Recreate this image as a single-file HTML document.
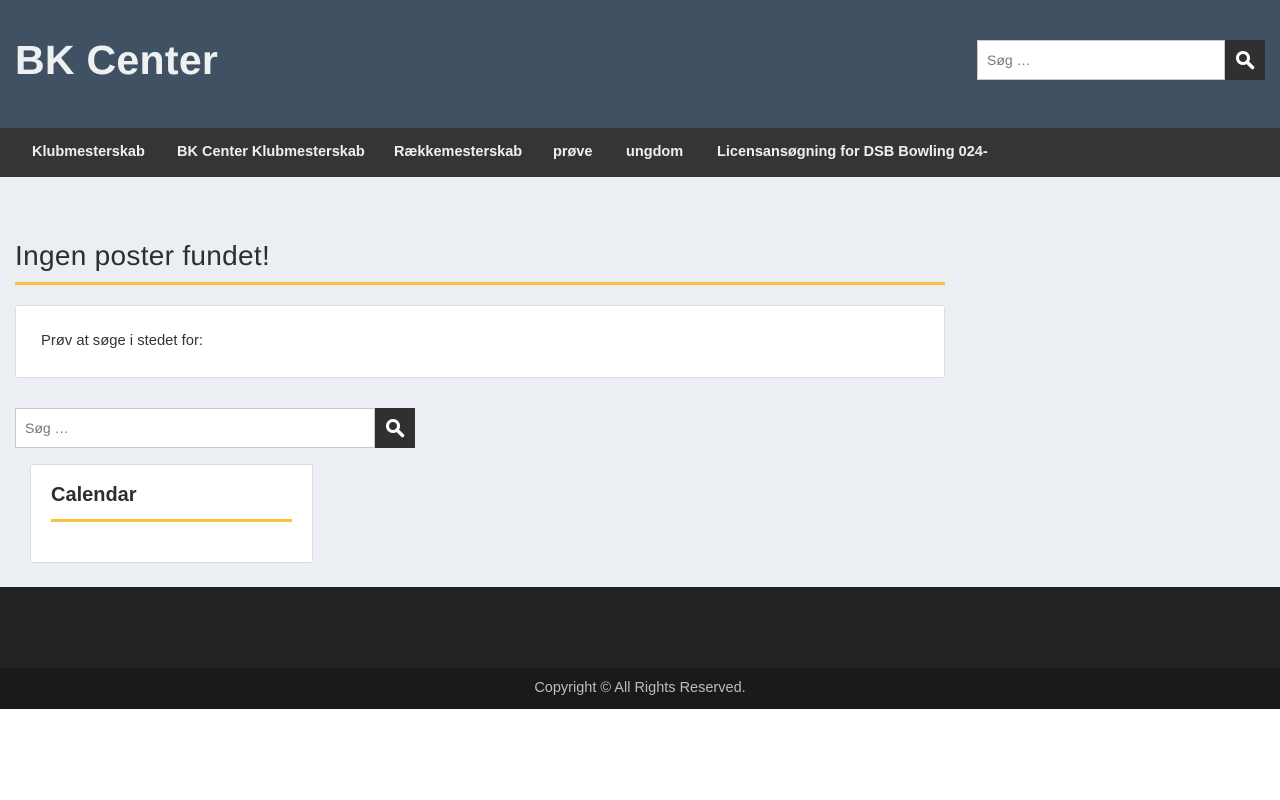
<!DOCTYPE html>
<html><head><meta charset="utf-8"><style>
*{box-sizing:border-box;margin:0;padding:0}
body{width:1280px;height:800px;background:#fff;font-family:"Liberation Sans","DejaVu Sans",sans-serif;position:relative;overflow:hidden}
.hdr{position:absolute;left:0;top:0;width:1280px;height:128px;background:#405163}
.logo{position:absolute;left:15px;top:37px;color:#eef0f2;font-size:41px;font-weight:bold;letter-spacing:0.3px}
.sf{position:absolute;display:flex}
.sf .in{background:#fff;border:1px solid #c8c8c8;height:40px;font-size:14px;color:#777;padding:11px 9px}
.sf .bt{width:40px;height:40px;background:#303030;display:flex;align-items:center;justify-content:center}
.nav{position:absolute;left:0;top:128px;width:1280px;height:49px;background:#353535}
.nav span{position:absolute;top:16px;color:#eee;font-size:14.5px;font-weight:bold}
.main{position:absolute;left:0;top:177px;width:1280px;height:410px;background:#ebeef2}
h1{position:absolute;left:15px;top:240px;font-size:28px;font-weight:normal;color:#2e2e2e;letter-spacing:0.3px}
.bar{position:absolute;height:3px;background:#fcc23f}
.box{position:absolute;background:#fff;border:1px solid #dcdcdc;border-radius:3px}
.ft{position:absolute;left:0;top:587px;width:1280px;height:81px;background:#222}
.cp{position:absolute;left:0;top:668px;width:1280px;height:41px;background:#1a1a1a;color:#bbb;font-size:14.5px;text-align:center;line-height:41px}
</style></head><body>
<div class="hdr"><div class="logo">BK Center</div>
<div class="sf" style="left:977px;top:40px"><div class="in" style="width:248px">Søg …</div><div class="bt"><svg width="20" height="20" viewBox="0 0 20 20"><circle cx="8" cy="8" r="5.5" fill="none" stroke="#fff" stroke-width="3"/><path d="M12 12l5.5 5.5" stroke="#fff" stroke-width="3.5" stroke-linecap="round"/></svg></div></div>
</div>
<div class="nav">
<span style="left:32px">Klubmesterskab</span>
<span style="left:177px">BK Center Klubmesterskab</span>
<span style="left:394px">Rækkemesterskab</span>
<span style="left:553px">prøve</span>
<span style="left:626px">ungdom</span>
<span style="left:717px">Licensansøgning for DSB Bowling 024-</span>
</div>
<div class="main"></div>
<h1>Ingen poster fundet!</h1>
<div class="bar" style="left:15px;top:282px;width:930px"></div>
<div class="box" style="left:15px;top:305px;width:930px;height:73px"><div style="position:absolute;left:25px;top:27px;font-size:14.8px;color:#333">Prøv at søge i stedet for:</div></div>
<div class="sf" style="left:15px;top:408px"><div class="in" style="width:360px">Søg …</div><div class="bt"><svg width="20" height="20" viewBox="0 0 20 20"><circle cx="8" cy="8" r="5.5" fill="none" stroke="#fff" stroke-width="3"/><path d="M12 12l5.5 5.5" stroke="#fff" stroke-width="3.5" stroke-linecap="round"/></svg></div></div>
<div class="box" style="left:30px;top:464px;width:283px;height:99px"><div style="position:absolute;left:20px;top:19px;font-size:20px;font-weight:bold;color:#2e2e2e">Calendar</div><div class="bar" style="left:20px;top:54px;width:241px"></div></div>
<div class="ft"></div>
<div class="cp">Copyright © All Rights Reserved.</div>
</body></html>
